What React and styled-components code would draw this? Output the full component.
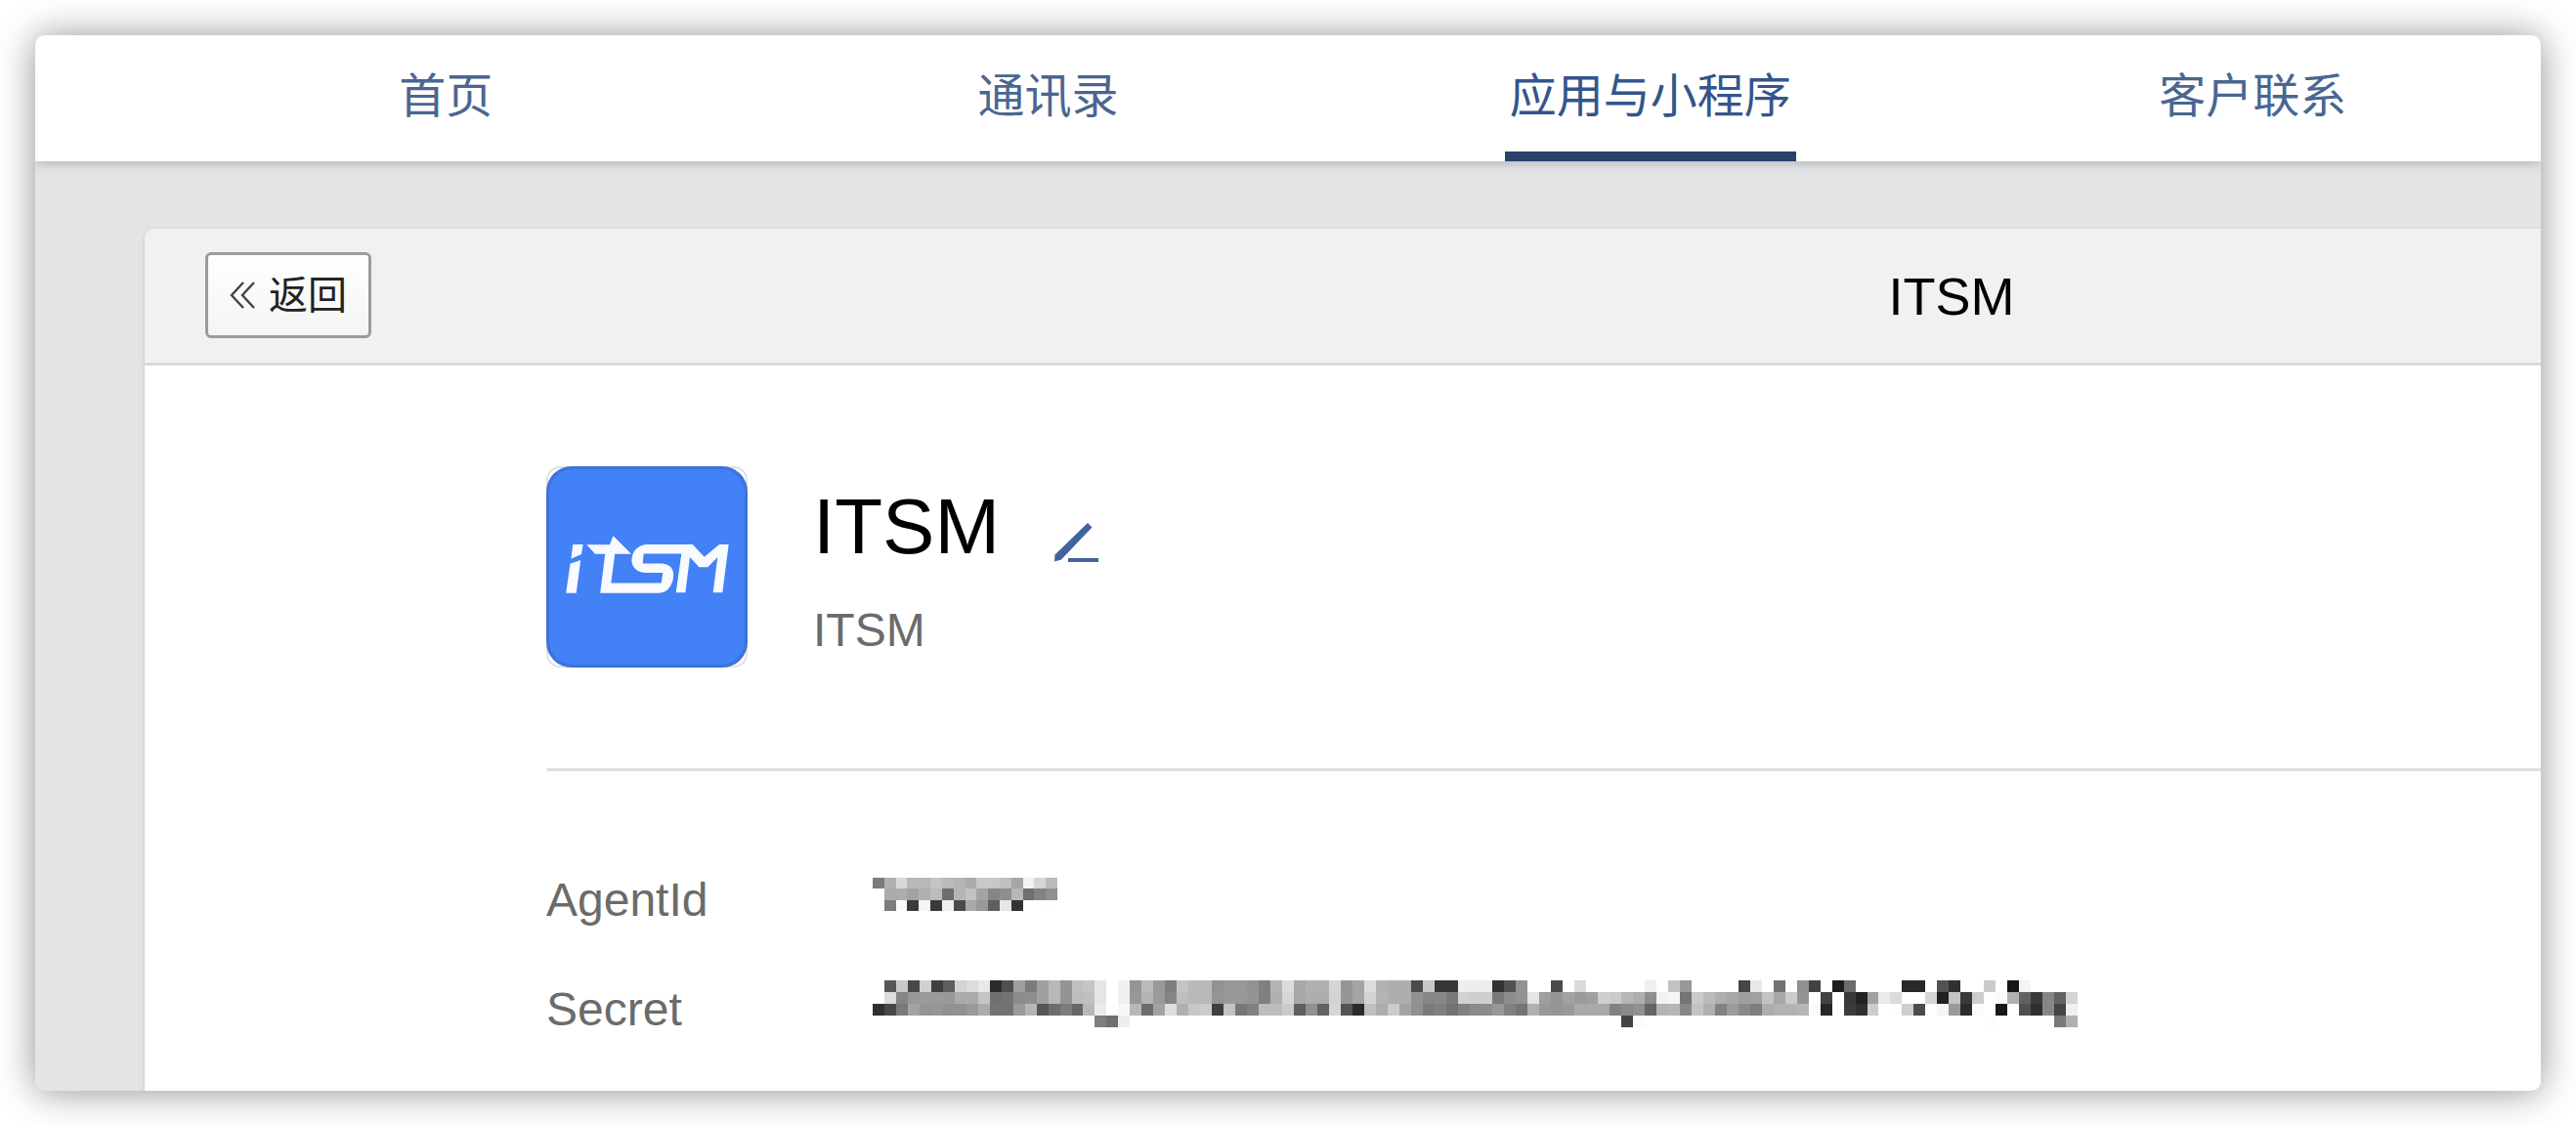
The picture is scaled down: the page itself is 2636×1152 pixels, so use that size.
import React from "react";
import styled, { createGlobalStyle } from "styled-components";

const GlobalStyle = createGlobalStyle`
  *, *::before, *::after { box-sizing: border-box; }
  body {
    margin: 0;
    background: #fff;
    color: #000;
    font-family: "Liberation Sans", "Noto Sans CJK SC", sans-serif;
    font-size: 48px;
  }
`;

const Stage = styled.div`
  display: flex;
  min-height: 100vh;
  padding: 36px;
`;

const Window = styled.div`
  flex: 1;
  min-width: 0;
  display: flex;
  flex-direction: column;
  overflow: hidden;
  border-radius: 10px;
  background: #e3e4e6;
  box-shadow: 0 1px 38px rgba(0, 0, 0, 0.44);
`;

/* The page column runs on past the right edge of the window. */
const Column = styled.div`
  width: calc(100% + 1246px);
  padding-left: 112px;
`;

const Header = styled.header`
  background: #fff;
  box-shadow: 0 2px 10px rgba(0, 0, 0, 0.22);
`;

const NavList = styled.ul`
  display: grid;
  grid-template-columns: repeat(6, 1fr);
  margin: 0;
  padding: 0;
  list-style: none;
`;

const NavItem = styled.li`
  display: flex;
  justify-content: center;
`;

const NavLink = styled.a`
  padding: 7px 5px 0;
  border-bottom: 10px solid ${(p) => (p.$active ? "#29416b" : "transparent")};
  color: ${(p) => (p.$active ? "#34558b" : "#4a6691")};
  font-size: 48px;
  line-height: 112px;
  text-decoration: none;
  white-space: nowrap;
`;

const Main = styled(Column).attrs({ as: "main" })`
  flex: 1;
  display: flex;
  padding-top: 69px;
`;

const Panel = styled.section`
  flex: 1;
  border-radius: 10px 10px 0 0;
  background: #fff;
  box-shadow: 0 1px 4px rgba(0, 0, 0, 0.14);
`;

const PanelBar = styled.div`
  display: grid;
  grid-template-columns: 1fr auto 1fr;
  align-items: center;
  padding: 24px 62px 25px;
  border-bottom: 3px solid #d7dbdf;
  border-radius: 10px 10px 0 0;
  background: #f1f1f1;
`;

const PanelTitle = styled.h1`
  margin: 0;
  padding-top: 2px;
  font-size: 54px;
  font-weight: 400;
  line-height: 64px;
`;

const BackButton = styled.button`
  justify-self: start;
  display: flex;
  align-items: center;
  gap: 14px;
  height: 88px;
  padding: 0 22px;
  border: 3px solid #9b9b9b;
  border-radius: 6px;
  background: linear-gradient(#fff, #f4f4f4);
  color: #222;
  font-family: inherit;
  font-size: 40px;
  line-height: 48px;
`;

const PanelBody = styled.div`
  padding-left: 411px;
`;

const AppSummary = styled.div`
  display: flex;
  gap: 67px;
  padding: 103px 0;
  border-bottom: 3px solid #dcdfe2;
`;

const AppLogo = styled.svg`
  display: block;
  width: 206px;
  height: 206px;
`;

const AppText = styled.div`
  display: flex;
  flex-direction: column;
  gap: 30px;
  padding-top: 14px;
`;

const NameRow = styled.div`
  display: flex;
  align-items: flex-end;
  gap: 56px;
`;

const AppName = styled.h2`
  margin: 0;
  font-size: 80px;
  font-weight: 400;
  line-height: 96px;
`;

const EditButton = styled.button`
  display: flex;
  padding: 0 0 12px;
  border: 0;
  background: none;
`;

const AppNote = styled.p`
  margin: 0;
  color: #6b6b6b;
  font-size: 48px;
  line-height: 56px;
`;

const Details = styled.dl`
  display: grid;
  grid-template-columns: 334px 1fr;
  row-gap: 40px;
  margin: 0;
  padding: 96px 0 46px;
`;

const Term = styled.dt`
  color: #6b6b6b;
  font-size: 48px;
  line-height: 72px;
`;

const Value = styled.dd`
  display: flex;
  align-items: center;
  margin: 0;
  padding-bottom: 12px;
`;

/* One entry per mosaic column: two hex digits of grey for each cell, top down. */
const AGENT_ID = `
  7cffff b0ab7c d9adfa b8a23a b8aff5 c4bc3a bb6ef0 b5b54a
  acc2a8 c8a399 c8855e bf8ee6 a6b833 f270ff d683ff bc90fe`;

const SECRET = `
  ffff30 57dc47 c88579 4899a3 d09a94 3f9b96 5e9990 d4ab92 dcab9a e8c6ac
  2c7072 507472 9e8c9a 7c8eb5 a0a056 b8b86d 94947c c0bd66 c5bfb8 e5e5eb7e
  ffffff70 f0f0f7ee 9497b8 bbb46c 999aa3 7e84de c4bfb0 b9b9c8 b9b9cb 92943f
  9898c3 989877 929480 8080bc b4b0bd dcd6ca a8a85e b0ad90 b0ad62 d6d4d6
  969654 a4a42a dcd4bf b2b4ad aeaecc aeaea4 4a9290 c8867a 368880 367a72
  eed280 eecf8a edcf8c 337a98 528d80 929274 ffe4b0 ff9e98 4a9696 fda29a
  da9aaa ffa0aa ffcfaa ffca82 ffb68a44 ffae90fb ef8e64 fff2b4 c2f6b6 987486
  ffcac4 ffbbb0 ffae82 ffa89c 46a08a e8a07e ffc4ae 72a8b2 fdccb2 9094b6
  42fffb ff4226 1effff 6c383c ff2230 ffa0cc ffeaff ffdafd 28ffcf 28ff4c
  ffd4ff 5220f6 30c498 ff3a2c ffccfb cbfffffd fffa18 16b0ff f56250 ff3a30
  ff8686 ff624478 ffd4f0b0`;

function Mosaic({ data, rows, width, height, label }) {
  const columns = data.trim().split(/\s+/);
  return (
    <svg
      role="img"
      aria-label={label}
      width={width}
      height={height}
      viewBox={`0 0 ${columns.length} ${rows}`}
      preserveAspectRatio="none"
      shapeRendering="crispEdges"
    >
      {columns.flatMap((column, x) =>
        column.match(/../g).map((grey, y) =>
          grey === "ff" ? null : (
            <rect key={`${x}-${y}`} x={x} y={y} width="1" height="1" fill={`#${grey}${grey}${grey}`} />
          )
        )
      )}
    </svg>
  );
}

function Logo() {
  return (
    <AppLogo viewBox="0 0 206 206" aria-hidden="true">
      <rect x="1" y="1" width="204" height="204" rx="13" fill="#fff" stroke="#e2e2e2" strokeWidth="2" />
      <rect width="206" height="206" rx="26" fill="#3b74dc" />
      <rect x="3" y="3" width="200" height="200" rx="24" fill="#4381f6" />
      <g fill="#f7faff">
        <path d="M27.3 80H37.6L36 90L25.3 94.7Z" />
        <path d="M24.5 99.7L35.2 96L30.7 129.7H20.2Z" />
        <path d="M41.3 80.3H65L68.4 71.3L87 89.7H50Z" />
        <path
          fillRule="evenodd"
          d="M60.3 89H70.3L66.3 119.5H117.7L119.3 109H102C93 109 87.4 103 87.4 96.5C87.4 87 94 80 104 80H149.7L161.7 92.7L177 80H186.7L180.3 129.3H170.7L175.3 93L165.3 103.3H156.3L147 93L142.3 129.3H132.7L138.3 89.5H99.7L98.7 99.5H117C126 99.5 130.2 104.5 130.2 111C130.2 121 124 129.7 115.4 129.7H55.2Z"
        />
      </g>
    </AppLogo>
  );
}

function DoubleChevron() {
  return (
    <svg width="26" height="28" viewBox="0 0 26 28" fill="none" stroke="#444" strokeWidth="2.4" aria-hidden="true">
      <path d="M14 1L2 14L14 27M25 1L13 14L25 27" />
    </svg>
  );
}

function EditIcon() {
  return (
    <svg width="46" height="40" viewBox="0 0 46 40" fill="#40649b" aria-hidden="true">
      <path d="M34 0L38.5 4.5L7 37.5L0 39.5L0.5 32.5Z" />
      <rect x="14" y="36" width="31" height="4" />
    </svg>
  );
}

const TABS = ["首页", "通讯录", "应用与小程序", "客户联系"];
const ACTIVE_TAB = "应用与小程序";

export default function App() {
  return (
    <>
      <GlobalStyle />
      <Stage>
        <Window>
          <Header>
            <Column as="nav">
              <NavList>
                {TABS.map((tab) => (
                  <NavItem key={tab}>
                    <NavLink
                      href="#"
                      $active={tab === ACTIVE_TAB}
                      aria-current={tab === ACTIVE_TAB ? "page" : undefined}
                    >
                      {tab}
                    </NavLink>
                  </NavItem>
                ))}
              </NavList>
            </Column>
          </Header>
          <Main>
            <Panel>
              <PanelBar>
                <BackButton type="button">
                  <DoubleChevron />
                  返回
                </BackButton>
                <PanelTitle>ITSM</PanelTitle>
              </PanelBar>
              <PanelBody>
                <AppSummary>
                  <Logo />
                  <AppText>
                    <NameRow>
                      <AppName>ITSM</AppName>
                      <EditButton type="button" aria-label="编辑">
                        <EditIcon />
                      </EditButton>
                    </NameRow>
                    <AppNote>ITSM</AppNote>
                  </AppText>
                </AppSummary>
                <Details>
                  <Term>AgentId</Term>
                  <Value>
                    <Mosaic data={AGENT_ID} rows={3} width={189} height={34} label="AgentId" />
                  </Value>
                  <Term>Secret</Term>
                  <Value>
                    <Mosaic data={SECRET} rows={4} width={1233} height={48} label="Secret" />
                  </Value>
                </Details>
              </PanelBody>
            </Panel>
          </Main>
        </Window>
      </Stage>
    </>
  );
}
